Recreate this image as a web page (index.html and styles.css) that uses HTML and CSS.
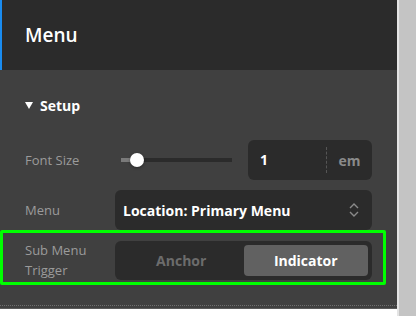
FILE: index.html
```html
<!DOCTYPE html>
<html>

	<head>
		<meta charset="UTF-8">
		<title>Menu</title>
		<link rel="stylesheet" href="styles.css">
	</head>

	<body>
		<div class="page">
			<div class="panel">
				<div class="panel-head">Menu</div>
				<div class="section">
					<div class="section-title"><span class="caret"></span>Setup</div>

					<div class="row">
						<div class="label">Font Size</div>
						<div class="control split">
							<div class="slider">
								<div class="track"><div class="fill"></div><div class="thumb"></div></div>
							</div>
							<div class="number">
								<span class="value">1</span>
								<span class="unit">em</span>
							</div>
						</div>
					</div>

					<div class="row">
						<div class="label">Menu</div>
						<div class="control select">
							<span>Location: Primary Menu</span>
							<svg width="12" height="16" viewBox="0 0 12 16">
								<path d="M2 6 L6 2 L10 6 M2 10 L6 14 L10 10" fill="none" stroke="#8a8a8a" stroke-width="1.4"/>
							</svg>
						</div>
					</div>

					<div class="row highlight">
						<div class="label">Sub Menu<br>Trigger</div>
						<div class="control toggle">
							<div class="opt">Anchor</div>
							<div class="opt active">Indicator</div>
						</div>
					</div>
				</div>
			</div>
			<div class="side"></div>
		</div>
	</body>

</html>
```

FILE: styles.css
```css
* {
	margin: 0;
	padding: 0;
	box-sizing: border-box;
}

body {
	width: 416px;
	height: 316px;
	overflow: hidden;
	background: #fff;
	font-family: "Open Sans", "Noto Sans", sans-serif;
}

.page {
	display: flex;
	height: 316px;
}

.panel {
	width: 397px;
	height: 309px;
	background: #404040;
	border-bottom: 1px solid #5a5a5a;
}

.side {
	width: 19px;
	background: #c4c4c4;
	border-left: 2px solid #e4e4e4;
}

.panel-head {
	height: 70px;
	background: #2b2b2b;
	border-left: 2px solid #1a8cf0;
	padding-left: 23px;
	display: flex;
	align-items: center;
	color: #fff;
	font-size: 19px;
	font-weight: 600;
}

.section {
	padding: 0 25px 0 25px;
	height: 236px;
	border-bottom: 1px dotted #6e6e6e;
}

.section-title {
	height: 70px;
	display: flex;
	align-items: center;
	color: #fff;
	font-size: 14px;
	font-weight: 700;
}

.caret {
	width: 0;
	height: 0;
	border-left: 4.5px solid transparent;
	border-right: 4.5px solid transparent;
	border-top: 7px solid #fff;
	margin-right: 7px;
}

.row {
	display: flex;
	align-items: center;
	margin-bottom: 10px;
	position: relative;
}

.label {
	width: 90px;
	color: #9b9b9b;
	font-size: 13px;
	line-height: 20px;
}

.control {
	flex: 1;
	height: 40px;
	border-radius: 6px;
}

.split {
	display: flex;
	gap: 8px;
}

.slider {
	flex: 1;
	display: flex;
	align-items: center;
	padding: 0 8px 0 6px;
}

.track {
	position: relative;
	width: 100%;
	height: 4px;
	background: #2b2b2b;
}

.fill {
	width: 16px;
	height: 4px;
	background: #7a7a7a;
}

.thumb {
	position: absolute;
	left: 9px;
	top: -5px;
	width: 14px;
	height: 14px;
	border-radius: 50%;
	background: #fff;
	box-shadow: 0 1px 3px rgba(0, 0, 0, 0.4);
}

.number {
	width: 124px;
	background: #2b2b2b;
	border-radius: 6px;
	display: flex;
	align-items: center;
}

.value {
	width: 79px;
	padding-left: 12px;
	color: #fff;
	font-size: 14px;
	font-weight: 700;
	border-right: 1px dashed #555;
	line-height: 26px;
}

.unit {
	flex: 1;
	text-align: center;
	color: #8a8a8a;
	font-size: 14px;
	font-weight: 700;
}

.select {
	background: #2b2b2b;
	display: flex;
	align-items: center;
	justify-content: space-between;
	padding: 0 12px 0 8px;
	color: #fff;
	font-size: 14px;
	font-weight: 700;
}

.toggle {
	background: #2b2b2b;
	height: 39px;
	padding: 4px;
	display: flex;
}

.opt {
	flex: 1;
	display: flex;
	align-items: center;
	justify-content: center;
	font-size: 14px;
	font-weight: 700;
	color: #6c6c6c;
	border-radius: 4px;
}

.opt.active {
	background: #616161;
	color: #fff;
}

.highlight::after {
	content: "";
	position: absolute;
	left: -25px;
	right: -14px;
	top: -10px;
	bottom: -5px;
	border: 3px solid #00ff00;
	border-radius: 2px;
}
```
